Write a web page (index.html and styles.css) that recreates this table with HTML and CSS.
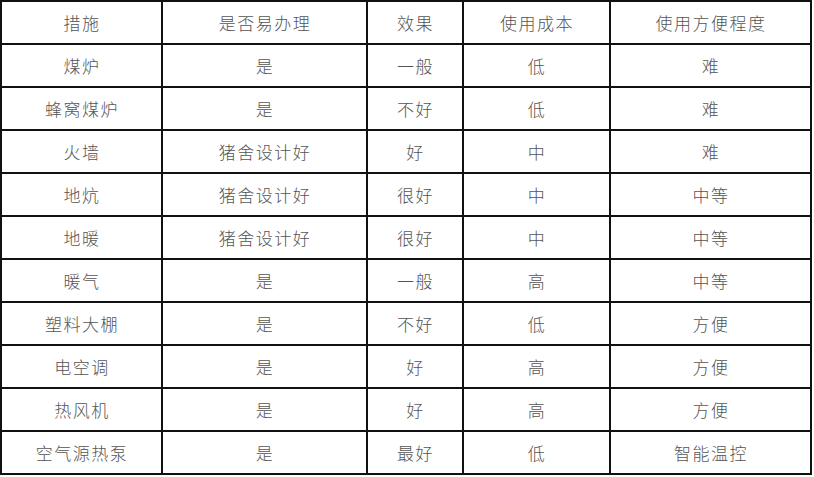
FILE: index.html
```html
<!DOCTYPE html>
<html lang="zh">
<head>
<meta charset="utf-8">
<link rel="stylesheet" href="styles.css">
</head>
<body>
<table class="grid">
<colgroup>
<col class="c1"><col class="c2"><col class="c3"><col class="c4"><col class="c5">
</colgroup>
<tr><td>措施</td><td>是否易办理</td><td>效果</td><td>使用成本</td><td>使用方便程度</td></tr>
<tr><td>煤炉</td><td>是</td><td>一般</td><td>低</td><td>难</td></tr>
<tr><td>蜂窝煤炉</td><td>是</td><td>不好</td><td>低</td><td>难</td></tr>
<tr><td>火墙</td><td>猪舍设计好</td><td>好</td><td>中</td><td>难</td></tr>
<tr><td>地炕</td><td>猪舍设计好</td><td>很好</td><td>中</td><td>中等</td></tr>
<tr><td>地暖</td><td>猪舍设计好</td><td>很好</td><td>中</td><td>中等</td></tr>
<tr><td>暖气</td><td>是</td><td>一般</td><td>高</td><td>中等</td></tr>
<tr><td>塑料大棚</td><td>是</td><td>不好</td><td>低</td><td>方便</td></tr>
<tr><td>电空调</td><td>是</td><td>好</td><td>高</td><td>方便</td></tr>
<tr><td>热风机</td><td>是</td><td>好</td><td>高</td><td>方便</td></tr>
<tr><td>空气源热泵</td><td>是</td><td>最好</td><td>低</td><td>智能温控</td></tr>
</table>
</body>
</html>
```
FILE: styles.css
```css
html, body {
  margin: 0;
  padding: 0;
  background: #fff;
}
.grid {
  border-collapse: collapse;
  table-layout: fixed;
  width: 812px;
  margin: 0;
  font-family: "Noto Sans CJK SC", sans-serif;
  font-weight: 300;
  font-size: 17px;
  color: #555;
}
.c1 { width: 161px; }
.c2 { width: 205px; }
.c3 { width: 96px; }
.c4 { width: 147px; }
.c5 { width: 201px; }
.grid td {
  border: 2px solid #111;
  height: 41px;
  padding: 0 0 0 1px;
  text-align: center;
  vertical-align: middle;
  letter-spacing: 1.5px;
  line-height: 20px;
}
```
